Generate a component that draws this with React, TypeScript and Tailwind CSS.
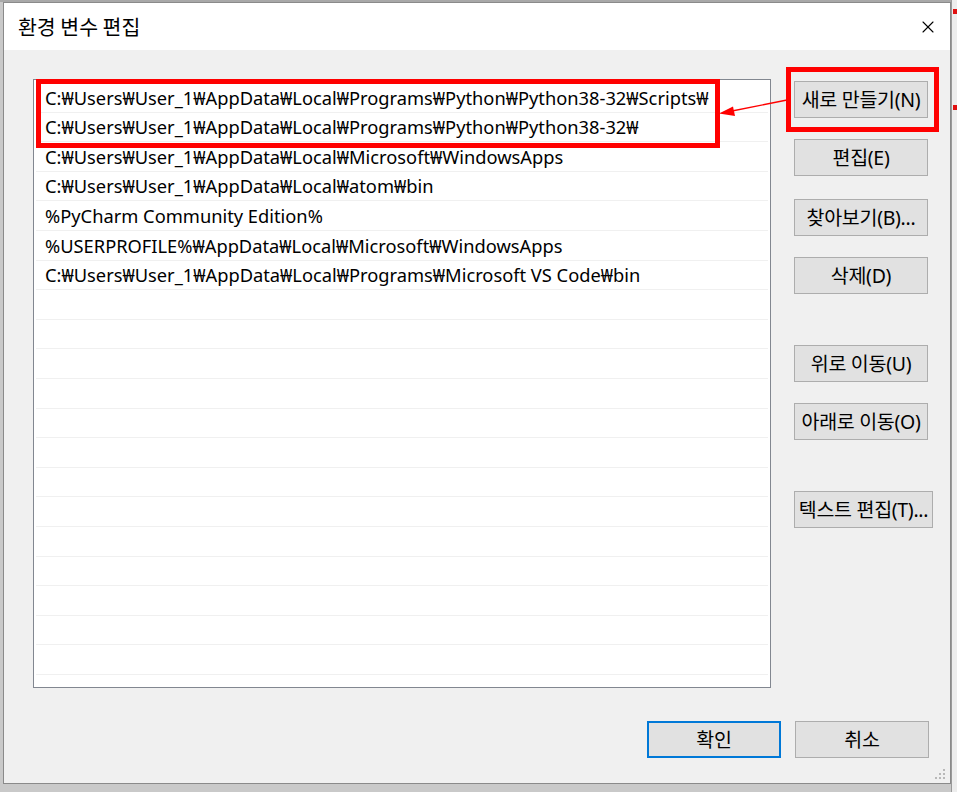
import { X } from 'lucide-react'

// 경로 목록
const PATHS = [
  'C:₩Users₩User_1₩AppData₩Local₩Programs₩Python₩Python38-32₩Scripts₩',
  'C:₩Users₩User_1₩AppData₩Local₩Programs₩Python₩Python38-32₩',
  'C:₩Users₩User_1₩AppData₩Local₩Microsoft₩WindowsApps',
  'C:₩Users₩User_1₩AppData₩Local₩atom₩bin',
  '%PyCharm Community Edition%',
  '%USERPROFILE%₩AppData₩Local₩Microsoft₩WindowsApps',
  'C:₩Users₩User_1₩AppData₩Local₩Programs₩Microsoft VS Code₩bin',
]

const ROWS = [...PATHS, ...Array(14).fill('')]

const SIDE_BUTTONS: { label: string; mt: string; w?: string }[] = [
  { label: '새로 만들기(N)', mt: 'mt-0' },
  { label: '편집(E)', mt: 'mt-[21px]' },
  { label: '찾아보기(B)...', mt: 'mt-[23px]' },
  { label: '삭제(D)', mt: 'mt-[21px]' },
  { label: '위로 이동(U)', mt: 'mt-[51px]' },
  { label: '아래로 이동(O)', mt: 'mt-[21px]' },
  { label: '텍스트 편집(T)...', mt: 'mt-[51px]', w: 'w-[139px]' },
]

function WinButton({ label, className = '', primary = false }: { label: string; className?: string; primary?: boolean }) {
  const border = primary ? 'border-2 border-[#0078d7]' : 'border border-[#adadad]'
  return (
    <button className={`h-[37px] w-[134px] bg-[#e1e1e1] ${border} text-[19.5px] tracking-[-0.3px] text-black flex items-center justify-center whitespace-nowrap ${className}`}>
      {label}
    </button>
  )
}

export default function App() {
  return (
    <div className="relative w-[957px] h-[792px] overflow-hidden bg-[#c9c9c9] font-['Noto_Sans','Noto_Sans_CJK_KR',sans-serif]">
      {/* 뒤쪽 창 흔적 */}
      <div className="absolute top-0 right-0 w-[6px] h-full bg-[#ededed] border-l border-[#9a9a9a]" />
      <div className="absolute top-[9px] right-0 w-[4px] h-[5px] bg-[#e01010]" />
      <div className="absolute top-[105px] right-0 w-[4px] h-[5px] bg-[#e01010]" />
      <div className="absolute top-0 left-0 w-[951px] h-[2px] bg-[#a8a8a8]" />

      <div className="ml-[3px] mt-[2px] w-[948px] h-[782px] border border-[#8a8a8a] bg-[#f0f0f0] flex flex-col relative">
        {/* 제목 표시줄 */}
        <div className="h-[47px] bg-white flex items-center justify-between pl-[14px] pr-[12px]">
          <span className="text-[20.5px] text-black font-['Noto_Sans_CJK_KR',sans-serif]">환경 변수 편집</span>
          <X className="w-[20px] h-[20px] text-black" strokeWidth={1.3} />
        </div>

        <div className="flex-1 flex flex-col pl-[29px] pt-[29px]">
          <div className="flex">
            <div className="w-[738px] h-[609px] bg-white border border-[#828790] px-[2px] pt-[3px] overflow-hidden">
              {ROWS.map((p, i) => (
                <div key={i} className="h-[29.6px] border-b border-[#f0f0f0] flex items-center pl-[9px] text-[18.3px] text-black whitespace-nowrap">
                  {p}
                </div>
              ))}
            </div>
            <div className="ml-[23px] pt-[2px] flex flex-col">
              {SIDE_BUTTONS.map((b) => (
                <WinButton key={b.label} label={b.label} className={`${b.mt} ${b.w ?? ''}`} />
              ))}
            </div>
          </div>

          <div className="flex justify-end gap-[14px] pr-[21px] mt-[33px]">
            <WinButton label="확인" primary />
            <WinButton label="취소" />
          </div>
        </div>

        {/* 크기 조절 손잡이 */}
        <svg className="absolute right-[4px] bottom-[3px]" width="12" height="12" viewBox="0 0 12 12">
          {[[9, 1], [5, 5], [9, 5], [1, 9], [5, 9], [9, 9]].map(([x, y]) => (
            <rect key={`${x}-${y}`} x={x} y={y} width="2" height="2" fill="#b8b8b8" />
          ))}
        </svg>
      </div>

      {/* 빨간 강조 표시 */}
      <div className="absolute left-[36px] top-[79px] w-[684px] h-[69px] border-[5px] border-[#ff0000] pointer-events-none" />
      <div className="absolute left-[786px] top-[67px] w-[153px] h-[65px] border-[5px] border-[#ff0000] pointer-events-none" />
      <svg className="absolute left-0 top-0 pointer-events-none" width="957" height="792">
        <line x1="787" y1="100" x2="732" y2="111" stroke="#ff0000" strokeWidth="1.3" />
        <polygon points="719,113.5 733,106.5 735,116" fill="#ff0000" />
      </svg>
    </div>
  )
}
